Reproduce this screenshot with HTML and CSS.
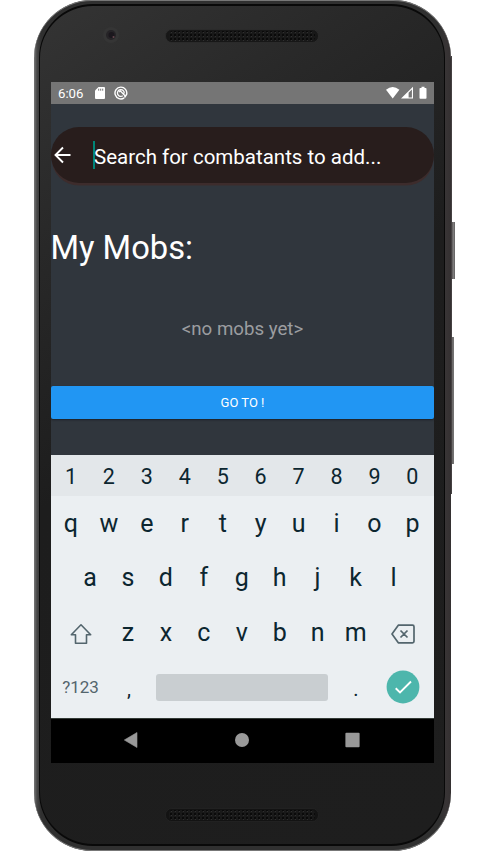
FILE: index.html
```
<!DOCTYPE html>
<html lang="en">
<head>
<meta charset="utf-8">
<title>My Mobs</title>
<link rel="stylesheet" href="styles.css">
</head>
<body>
<div class="phone">
  <div class="side-button rim"></div>
  <div class="side-button power"></div>
  <div class="side-button volume"></div>
  <div class="body">
    <div class="bezel-top">
      <svg class="camera" width="18" height="18" viewBox="0 0 18 18"><circle cx="9" cy="9" r="8" fill="#353535"/><circle cx="9" cy="9" r="5" fill="#262427"/><circle cx="9.500" cy="9" r="3" fill="#1b171d"/><circle cx="11.500" cy="11" r="1" fill="#65474f"/></svg>
      <svg class="speaker" width="154" height="14" viewBox="0 0 154 14"><defs><pattern id="mesh" width="4" height="4" patternUnits="userSpaceOnUse"><rect width="4" height="4" fill="#191919"/><circle cx="2" cy="2" r="1" fill="#050505"/><rect x="2" y="3" width="1" height="1" fill="#303030"/></pattern></defs><rect x=".5" y=".5" width="153" height="13" rx="6.500" fill="#171717" stroke="#303030" stroke-width=".6"/><rect x="4" y="2" width="146" height="10" rx="4" fill="url(#mesh)"/></svg>
    </div>
    <div class="screen">
      <div class="status">
        <span class="time">6:06</span>
        <svg class="sd" width="10" height="12" viewBox="0 0 10 12"><path d="M3.500 0H9q1 0 1 1v10q0 1-1 1H1q-1 0-1-1V3.500z" fill="#fff"/><path d="M3.700 1.700v2M5.700 1.700v2M7.700 1.700v2" stroke="#757575" stroke-width="1"/></svg>
        <svg class="app-icon" width="14" height="14" viewBox="0 0 14 14" fill="none" stroke="#fff"><path d="M10.200 11.900A5.900 5.900 0 1 1 12.600 8.500L10.500 11.500" stroke-width="1.400"/><path d="M8.800 9.800A3.400 3.400 0 1 1 10.200 7.500M5 6l1.500-1 4.800 5" stroke-width="1.300"/></svg>
        <svg class="signals" width="42" height="14" viewBox="0 0 42 14" fill="#fff"><path d="M0 3.800Q6.700-1.800 13.400 3.800L6.700 12.500z"/><path d="M15 12.500 27 .8V12.500zM22.600 6.700V11.400H25.900V3.500z" fill-rule="evenodd"/><path d="M33.500 1.900h2V.7h3v1.200h1.200q.8 0 .8.800v9.200q0 .8-.8.800h-5.400q-.8 0-.8-.8V2.700q0-.8.8-.8z"/></svg>
      </div>
      <div class="app">
        <div class="search">
          <svg class="back" width="18" height="18" viewBox="0 0 18 18" fill="none" stroke="#fff" stroke-width="1.900"><path d="M16.500 9H2M9 1.500 1.500 9 9 16.500"/></svg>
          <div class="caret"></div><span class="placeholder">Search for combatants to add...</span>
        </div>
        <h1 class="title">My Mobs:</h1>
        <p class="empty">&lt;no mobs yet&gt;</p>
        <div class="go">GO TO !</div>
      </div>
      <div class="keyboard">
        <div class="keys numbers"><span>1</span><span>2</span><span>3</span><span>4</span><span>5</span><span>6</span><span>7</span><span>8</span><span>9</span><span>0</span></div>
        <div class="keys"><span>q</span><span>w</span><span>e</span><span>r</span><span>t</span><span>y</span><span>u</span><span>i</span><span>o</span><span>p</span></div>
        <div class="keys middle"><span>a</span><span>s</span><span>d</span><span>f</span><span>g</span><span>h</span><span>j</span><span>k</span><span>l</span></div>
        <div class="keys lower">
          <span class="wide"><svg width="22" height="22" viewBox="0 0 22 22" fill="none" stroke="#53656d" stroke-width="1.600" stroke-linejoin="round"><path d="M11 1.800 1.300 11.700H5.500V20.200H16.500V11.700H20.700z"/></svg></span>
          <span>z</span><span>x</span><span>c</span><span>v</span><span>b</span><span>n</span><span>m</span>
          <span class="wide"><svg width="24" height="20" viewBox="0 0 24 20" fill="none" stroke="#53656d" stroke-width="1.700" stroke-linejoin="round"><path d="M7.300 1.200H21.500q1.500 0 1.500 1.500V17.300q0 1.500-1.500 1.500H7.300L1 10zM9.500 6.500l7 7m0-7-7 7"/></svg></span>
        </div>
        <div class="keys bottom">
          <span class="symbols">?123</span><span class="comma">,</span><div class="space"></div><span class="period">.</span>
          <svg class="enter" width="34" height="34" viewBox="0 0 34 34"><circle cx="17" cy="17" r="16.400" fill="#4db6ac"/><path d="M9.700 18.300 14 22.500 25 11.500" fill="none" stroke="#fff" stroke-width="1.900"/></svg>
        </div>
      </div>
      <div class="nav">
        <svg width="14" height="16" viewBox="0 0 14 16"><path d="M13 .5V15.500L.3 8z" fill="#999" stroke="#999" stroke-linejoin="round" stroke-width=".6"/></svg>
        <svg width="14" height="16" viewBox="0 0 14 16"><circle cx="7" cy="8" r="7" fill="#999"/></svg>
        <svg width="15" height="16" viewBox="0 0 15 16"><rect x=".4" y=".8" width="14.200" height="14.400" rx="1" fill="#999"/></svg>
      </div>
    </div>
    <div class="bezel-bottom">
      <svg width="154" height="14" viewBox="0 0 154 14"><rect x=".5" y=".5" width="153" height="13" rx="6.500" fill="#131313" stroke="#292929" stroke-width=".6"/><rect x="4" y="2" width="146" height="10" rx="4" fill="url(#mesh)"/></svg>
    </div>
  </div>
</div>
</body>
</html>
```
FILE: styles.css
```
* { box-sizing: border-box; }
body { margin: 0; width: 484px; height: 863px; background: #fff; overflow: hidden; font-family: Roboto, sans-serif; }
.phone { position: relative; width: 417px; height: 851px; margin: 0 0 0 34px; padding: 1px 6px 2px 5px; border-radius: 58px; background: linear-gradient(90deg, #777 0, #474747 3px, #303030 7px, #303030 405px, #383435 412px, #343031 100%); box-shadow: inset 0 1px 0 #777, inset 0 -1px 0 #777; }
.body { margin-top: 3px; height: 842px; padding: 0 11px; border: 1px solid #090909; border-width: 2px 1px; border-radius: 54px; background: linear-gradient(145deg, #343434 0, #292929 20%, #1d1d1d 45%, #1e1e1e 100%); }
.side-button { position: absolute; background: linear-gradient(90deg, #5b5959, #858383 60%, #555); }
.power { left: 418px; top: 222px; width: 3px; height: 57px; }
.volume { left: 418px; top: 337px; width: 2px; height: 127px; }
.rim { left: 417px; top: 56px; width: 1px; height: 438px; background: #454142; }
.bezel-top { height: 76px; display: flex; align-items: flex-start; padding: 20px 0 0 51px; }
.speaker { margin: 3px 0 0 45px; }
.screen { width: 383px; height: 681px; }
.bezel-bottom { height: 80px; display: flex; justify-content: center; padding: 45px 0 0; }
.status { height: 22px; background: #757575; display: flex; align-items: center; padding: 0 7px; color: #fff; font-size: 13.2px; }
.time { width: 37px; }
.app-icon { margin-left: 9px; }
.signals { margin-left: auto; position: relative; left: 1px; }
.app { height: 351px; padding-top: 23px; background: #30363d; overflow: hidden; }
.search { display: flex; align-items: center; height: 56px; padding-left: 3px; border-radius: 28px; background: #281d1c; box-shadow: 0 3px 0 -.5px #3d2c2c; color: #fff; }
.caret { width: 2px; height: 28px; margin-left: 21px; background: #008577; }
.placeholder { margin-left: -1px; font-size: 20.5px; line-height: 28px; padding-top: 3px; white-space: nowrap; }
.title { margin: 45px 0 0 -.5px; color: #fff; font-size: 32.7px; font-weight: 400; line-height: 40px; }
.empty { margin: 49px 0 0; color: #9b9da0; font-size: 18.7px; line-height: 24px; text-align: center; }
.go { margin-top: 45px; height: 33px; border-radius: 2px; background: #2196f3; box-shadow: 0 1px 2px #1c2126; color: #fff; font-size: 13px; line-height: 34px; text-align: center; }
.keyboard { height: 263px; background: #ebeff2; color: #0c2630; }
.keys { height: 55px; padding: 0 1px; display: flex; align-items: center; font-size: 25px; }
.keys > span { width: 37.95px; text-align: center; line-height: 30px; }
.numbers { height: 41px; background: #e3e7ea; font-size: 21.5px; padding-top: 2px; }
.middle { height: 54px; padding-left: 20px; }
.lower { padding: 1px 1px 0 2px; }
.keys > .wide { width: 56px; display: flex; justify-content: center; padding-top: 2px; }
.bottom { height: 56px; padding: 0 0 2px; font-size: 20px; }
.keys > .symbols { width: 59px; font-size: 17px; color: #53656d; }
.keys > .comma { width: 38px; padding-top: 4px; }
.space { width: 172px; height: 27px; margin-left: 8px; border-radius: 3px; background: #c9ced1; }
.keys > .period { width: 38px; margin-left: 9px; padding-top: 4px; }
.enter { margin-left: 11px; }
.nav { height: 45px; background: #000; display: flex; align-items: center; justify-content: space-between; padding: 0 74px 2px 73px; border-top: 1px solid #333b37; }
```
